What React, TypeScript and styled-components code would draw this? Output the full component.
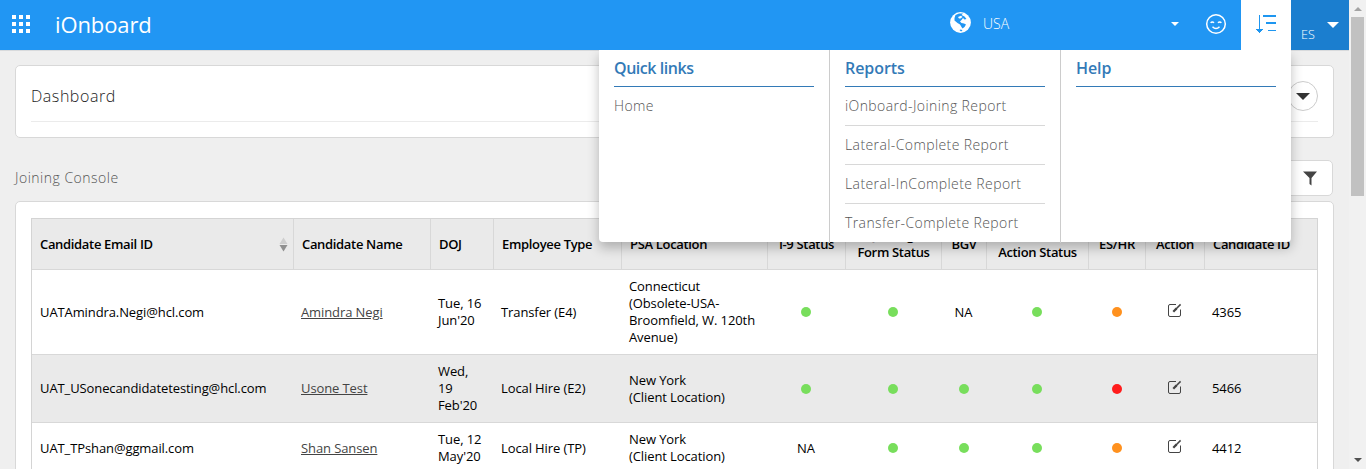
import React from "react";
import styled, { createGlobalStyle } from "styled-components";

const Global = createGlobalStyle`
  * { box-sizing: border-box; }
  html, body { margin: 0; height: 100%; overflow: hidden; }
  body { background: #efefef; font-family: "Open Sans", sans-serif; color: #000; font-size: 13px; }
`;

const Page = styled.div`
  display: flex;
  width: 1366px;
  height: 469px;
  overflow: hidden;
`;
const Main = styled.div`
  position: relative;
  width: 1349px;
  height: 469px;
  overflow: hidden;
`;
const TopBar = styled.header`
  display: flex;
  height: 50px;
  background: #2196f3;
  color: #fff;
  box-shadow: 0 1px 0 #d8dadc;
`;
const AppsButton = styled.div`
  width: 55px;
  padding: 15px 0 0 12px;
`;
const Brand = styled.div`
  flex: 1;
  font-size: 22px;
  line-height: 48px;
  letter-spacing: -0.1px;
`;
const CountryPicker = styled.div`
  display: flex;
  width: 241px;
  padding: 12px 0 0 0;
  font-size: 14px;
  line-height: 24px;
  font-weight: 300;
`;
const CountryName = styled.span`
  width: 200px;
  padding-left: 12px;
`;
const Caret = styled.span<{ $size: number; $color?: string }>`
  width: 0;
  height: 0;
  border: ${(p) => p.$size}px solid transparent;
  border-top-color: ${(p) => p.$color ?? "#fff"};
  border-bottom: 0;
`;
const SmileButton = styled.div`
  width: 50px;
  padding: 13px 0 0 14px;
`;
const LinksButton = styled.div`
  width: 50px;
  padding: 14px 0 0 14px;
  background: #fff;
`;
const UserMenu = styled.div`
  display: flex;
  width: 58px;
  padding: 22px 0 0 10px;
  background: #1b7ecf;
  font-size: 12.5px;
  line-height: 25px;
  font-weight: 300;
  gap: 12px;
`;

const Panel = styled.section<{ $height: number }>`
  height: ${(p) => p.$height}px;
  margin: 0 15px;
  padding: 15px;
  background: #fff;
  border: 1px solid #d8d8d8;
  border-radius: 5px;
`;
const TablePanel = styled(Panel)`
  padding-top: 16px;
`;
const Content = styled.main`
  padding-top: 15px;
`;
const PanelTitle = styled.div`
  display: flex;
  justify-content: space-between;
  height: 41px;
  border-bottom: 1px solid #ebebeb;
  font-size: 16px;
  line-height: 30px;
  font-weight: 300;
  color: #222;
  letter-spacing: 0.55px;
`;
const RoundButton = styled.span`
  display: flex;
  align-items: center;
  justify-content: center;
  width: 30px;
  height: 30px;
  border: 1px solid #ccc;
  border-radius: 50%;
`;
const SectionHead = styled.div`
  display: flex;
  justify-content: space-between;
  height: 63px;
  padding: 22px 16px 0 15px;
`;
const SectionTitle = styled.div`
  font-size: 14px;
  line-height: 35px;
  letter-spacing: 0.5px;
  font-weight: 300;
  color: #555;
`;
const FilterButton = styled.div`
  width: 47px;
  height: 36px;
  padding: 10px 0 0 16px;
  background: #fff;
  border: 1px solid #d8d8d8;
  border-radius: 5px;
`;

const Grid = styled.div`
  width: 1287px;
  border: 1px solid #d4d4d4;
  border-bottom: 0;
`;
const Row = styled.div<{ $height: number; $shade?: boolean }>`
  display: grid;
  grid-template-columns: 262px 137px 63px 128px 146px 78px 96px 45px 102px 57px 59px 112px;
  height: ${(p) => p.$height}px;
  background: ${(p) => (p.$shade ? "#eaeaea" : "#fff")};
  border-bottom: 1px solid #d8d8d8;
`;
const HeadCell = styled.div<{ $center?: boolean }>`
  display: flex;
  align-items: center;
  justify-content: ${(p) => (p.$center ? "center" : "space-between")};
  padding: 0 ${(p) => (p.$center ? 0 : 5)}px 0 ${(p) => (p.$center ? 0 : 8)}px;
  border-right: 1px solid #d8d8d8;
  font-weight: 600;
  font-size: 13px;
  letter-spacing: -0.33px;
  line-height: 17px;
  white-space: pre;
  text-align: center;
  &:last-child { border-right: 0; }
`;
const Cell = styled.div<{ $center?: boolean }>`
  display: flex;
  align-items: center;
  justify-content: ${(p) => (p.$center ? "center" : "flex-start")};
  padding-left: ${(p) => (p.$center ? 0 : 7)}px;
  padding-right: ${(p) => (p.$center ? 2 : 0)}px;
  letter-spacing: -0.1px;
  line-height: 17px;
  white-space: pre;
  &:first-child { padding-left: 8px; }
`;
const NameLink = styled.a`
  color: #444;
  text-decoration: underline;
`;
const Dot = styled.span<{ $color: string }>`
  width: 10px;
  height: 10px;
  border-radius: 50%;
  background: ${(p) => p.$color};
`;

const MegaMenu = styled.nav`
  position: absolute;
  top: 50px;
  left: 599px;
  display: grid;
  grid-template-columns: 231px 231px 230px;
  height: 192px;
  background: #fff;
  border-radius: 0 0 4px 4px;
  box-shadow: 0 6px 12px rgba(0, 0, 0, 0.25);
  clip-path: inset(0 -20px -20px -20px);
`;
const MenuColumn = styled.div`
  padding: 0 15px;
  border-right: 1px solid #ccc;
  &:last-child { border-right: 0; }
`;
const MenuTitle = styled.div<{ $tight?: boolean }>`
  height: 37px;
  border-bottom: 1px solid #337ab7;
  color: #337ab7;
  font-size: 16px;
  font-weight: 600;
  letter-spacing: ${(p) => (p.$tight ? -0.45 : -0.07)}px;
  line-height: 36px;
`;
const MenuItem = styled.div`
  height: 39px;
  border-bottom: 1px solid #d8d8d8;
  color: #555;
  font-size: 14px;
  font-weight: 300;
  letter-spacing: 0.4px;
  line-height: 38px;
  white-space: nowrap;
  &:last-child { border-bottom: 0; }
`;

const ScrollBar = styled.div`
  display: flex;
  flex-direction: column;
  align-items: center;
  justify-content: space-between;
  width: 17px;
  height: 469px;
  padding: 7px 0;
  background: #f1f1f1;
`;
const ScrollTop = styled.div`
  display: flex;
  flex-direction: column;
  align-items: center;
  gap: 6px;
`;
const Thumb = styled.div`
  width: 13px;
  height: 179px;
  background: #c1c1c1;
`;
const CountryCaret = styled(Caret)`
  margin-top: 10px;
`;

const AppsIcon = () => (
  <svg width="18" height="18" fill="#fff" shapeRendering="crispEdges">
    {[0, 7, 14].map((y) =>
      [0, 7, 14].map((x) => <rect key={`${x}-${y}`} x={x} y={y} width="4" height="4" />)
    )}
  </svg>
);
const GlobeIcon = () => (
  <svg width="21" height="21" fill="#2196f3">
    <circle cx="10.500" cy="10.500" r="10.400" fill="#fff" />
    <path d="M5.500 3L9 1.600L13 1.500L11.500 3L14.500 4.500L16.500 7L14.500 7.500L13 6L11.500 8L10 9.500L11.500 11L14 11.500L16 12.500L14.500 15L12.500 16.500L11.500 15L10 12.500L7.500 11L4.500 8.500L4.500 6Z" />
    <path d="M8 5L11 3.800L12.500 5L10.500 6.500L9 6.500Z" fill="#fff" />
    <path d="M9.500 18L11 17.500L12.500 18.500L11 19.500Z" />
  </svg>
);
const FilterIcon = () => (
  <svg width="14" height="15" fill="#444">
    <path d="M0 0.500H14L8.500 7V14.500L6.500 13V7Z" />
  </svg>
);
const SmileIcon = () => (
  <svg width="22" height="22" fill="none" stroke="#fff" strokeWidth="1.5">
    <circle cx="11" cy="11" r="9.3" />
    <path d="M5.600 9.800Q7.300 8 9 9.800M13 9.800Q14.700 8 16.400 9.800" />
    <path d="M7.500 13.800Q11 17.400 14.500 13.800" />
  </svg>
);
const SortIcon = () => (
  <svg width="22" height="20" fill="none" stroke="#1e96f0" shapeRendering="crispEdges">
    <path d="M4.500 1V17" />
    <path d="M1 15H8L4.500 19Z" fill="#1e96f0" stroke="none" />
    <path d="M8 2H21M11 9H21" strokeWidth="2" />
    <path d="M13 16.500H21" />
  </svg>
);
const SortArrows = () => (
  <svg width="9" height="15">
    <path d="M0.500 7L4.500 0.500L8.500 7Z" fill="#cecece" />
    <path d="M0.500 8L4.500 14.500L8.500 8Z" fill="#909090" />
  </svg>
);
const EditSvg = styled.svg`
  margin-bottom: 3px;
`;
const EditIcon = () => (
  <EditSvg width="15" height="15" fill="none" stroke="#444">
    <path d="M9 1.500H3Q1.500 1.500 1.500 3V12Q1.500 13.500 3 13.500H12Q13.500 13.500 13.500 12V6.500" />
    <path d="M6.300 8.700L9.600 5.400" strokeWidth="2.200" />
    <path d="M9 6L13.600 1.400" strokeWidth="1.500" />
  </EditSvg>
);

const GREEN = "#78de5c";
const ORANGE = "#ff911e";
const RED = "#ff1c1c";

const heads = [
  "Candidate Email ID", "Candidate Name", "DOJ", "Employee Type", "PSA Location", "I-9 Status",
  "Joining\nForm Status", "BGV", "Candidate\nAction Status", "ES/HR", "Action", "Candidate ID",
];
const rows = [
  { h: 85, email: "UATAmindra.Negi@hcl.com", name: "Amindra Negi", doj: "Tue, 16\nJun'20", type: "Transfer (E4)", loc: "Connecticut\n(Obsolete-USA-\nBroomfield, W. 120th\nAvenue)", st: [GREEN, GREEN, "NA", GREEN, ORANGE], id: "4365" },
  { h: 68, email: "UAT_USonecandidatetesting@hcl.com", name: "Usone Test", doj: "Wed,\n19\nFeb'20", type: "Local Hire (E2)", loc: "New York\n(Client Location)", st: [GREEN, GREEN, GREEN, GREEN, RED], id: "5466" },
  { h: 51, email: "UAT_TPshan@ggmail.com", name: "Shan Sansen", doj: "Tue, 12\nMay'20", type: "Local Hire (TP)", loc: "New York\n(Client Location)", st: ["NA", GREEN, GREEN, GREEN, ORANGE], id: "4412" },
];
const reports = ["iOnboard-Joining Report", "Lateral-Complete Report", "Lateral-InComplete Report", "Transfer-Complete Report"];

export default function App() {
  return (
    <Page>
      <Global />
      <Main>
        <TopBar>
          <AppsButton><AppsIcon /></AppsButton>
          <Brand>iOnboard</Brand>
          <CountryPicker>
            <GlobeIcon />
            <CountryName>USA</CountryName>
            <CountryCaret $size={4} />
          </CountryPicker>
          <SmileButton><SmileIcon /></SmileButton>
          <LinksButton><SortIcon /></LinksButton>
          <UserMenu>
            <span>ES</span>
            <Caret $size={6} />
          </UserMenu>
        </TopBar>
        <Content>
          <Panel $height={73}>
            <PanelTitle>
              <span>Dashboard</span>
              <RoundButton><Caret $size={7} $color="#333" /></RoundButton>
            </PanelTitle>
          </Panel>
          <SectionHead>
            <SectionTitle>Joining Console</SectionTitle>
            <FilterButton><FilterIcon /></FilterButton>
          </SectionHead>
          <TablePanel $height={400}>
            <Grid>
              <Row $height={51} $shade>
                {heads.map((h, i) => (
                  <HeadCell key={h} $center={i >= 5 && i <= 10}>
                    <span>{h}</span>
                    {i === 0 && <SortArrows />}
                  </HeadCell>
                ))}
              </Row>
              {rows.map((r, i) => (
                <Row key={r.id} $height={r.h} $shade={i % 2 === 1}>
                  <Cell>{r.email}</Cell>
                  <Cell><NameLink>{r.name}</NameLink></Cell>
                  <Cell>{r.doj}</Cell>
                  <Cell>{r.type}</Cell>
                  <Cell>{r.loc}</Cell>
                  {r.st.map((s, j) => (
                    <Cell key={j} $center>{s === "NA" ? s : <Dot $color={s} />}</Cell>
                  ))}
                  <Cell $center><EditIcon /></Cell>
                  <Cell>{r.id}</Cell>
                </Row>
              ))}
            </Grid>
          </TablePanel>
        </Content>
        <MegaMenu>
          <MenuColumn>
            <MenuTitle $tight>Quick links</MenuTitle>
            <MenuItem>Home</MenuItem>
          </MenuColumn>
          <MenuColumn>
            <MenuTitle>Reports</MenuTitle>
            {reports.map((r) => <MenuItem key={r}>{r}</MenuItem>)}
          </MenuColumn>
          <MenuColumn>
            <MenuTitle>Help</MenuTitle>
          </MenuColumn>
        </MegaMenu>
      </Main>
      <ScrollBar>
        <ScrollTop>
          <svg width="8" height="4"><path d="M0 4L4 0L8 4Z" fill="#a3a3a3" /></svg>
          <Thumb />
        </ScrollTop>
        <svg width="8" height="4"><path d="M0 0L4 4L8 0Z" fill="#505050" /></svg>
      </ScrollBar>
    </Page>
  );
}
